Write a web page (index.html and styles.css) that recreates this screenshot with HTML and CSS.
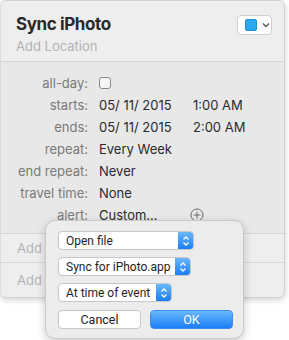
FILE: index.html
```html
<!DOCTYPE html>
<html lang="en">
<head>
  <meta charset="UTF-8">
  <title>Sync iPhoto</title>
  <link rel="stylesheet" href="styles.css">
</head>
<body>
  <div class="event-panel">
    <div class="event-header">
      <div class="title-block">
        <div class="event-title">Sync iPhoto</div>
        <div class="event-location">Add Location</div>
      </div>
      <div class="color-picker">
        <span class="color-swatch"></span>
        <svg class="chevron" width="8" height="6" viewBox="0 0 8 6"><path d="M1 1.5 L4 4.5 L7 1.5" fill="none" stroke="#555" stroke-width="1.3"/></svg>
      </div>
    </div>
    <div class="event-details">
      <div class="label">all-day:</div>
      <div class="value"><span class="checkbox"></span></div>
      <div class="label">starts:</div>
      <div class="value"><span class="date">05/ 11/ 2015</span><span class="time">1:00 AM</span></div>
      <div class="label">ends:</div>
      <div class="value"><span class="date">05/ 11/ 2015</span><span class="time">2:00 AM</span></div>
      <div class="label">repeat:</div>
      <div class="value">Every Week</div>
      <div class="label">end repeat:</div>
      <div class="value">Never</div>
      <div class="label">travel time:</div>
      <div class="value">None</div>
      <div class="label">alert:</div>
      <div class="value">Custom…
        <svg class="add-alert" width="14" height="14" viewBox="0 0 14 14"><circle cx="7" cy="7" r="6" fill="none" stroke="#6a6a6a" stroke-width="1"/><path d="M7 3.5 V10.5 M3.5 7 H10.5" stroke="#6a6a6a" stroke-width="1"/></svg>
      </div>
    </div>
    <div class="extra-row">Add Invitees</div>
    <div class="extra-row last">Add Notes, URL, or Attachments</div>
  </div>

  <div class="alert-popover">
    <div class="popup wide"><span class="popup-text">Open file</span><span class="stepper"><svg width="8" height="12" viewBox="0 0 8 12"><path d="M1.5 4.5 L4 2 L6.5 4.5 M1.5 7.5 L4 10 L6.5 7.5" fill="none" stroke="#fff" stroke-width="1.3"/></svg></span></div>
    <div class="popup mid"><span class="popup-text">Sync for iPhoto.app</span><span class="stepper"><svg width="8" height="12" viewBox="0 0 8 12"><path d="M1.5 4.5 L4 2 L6.5 4.5 M1.5 7.5 L4 10 L6.5 7.5" fill="none" stroke="#fff" stroke-width="1.3"/></svg></span></div>
    <div class="popup short"><span class="popup-text">At time of event</span><span class="stepper"><svg width="8" height="12" viewBox="0 0 8 12"><path d="M1.5 4.5 L4 2 L6.5 4.5 M1.5 7.5 L4 10 L6.5 7.5" fill="none" stroke="#fff" stroke-width="1.3"/></svg></span></div>
    <div class="button-row">
      <button class="btn">Cancel</button>
      <button class="btn primary">OK</button>
    </div>
  </div>
</body>
</html>
```
FILE: styles.css
```css
body {
  margin: 0;
  background-color: #ffffff;
  font-family: 'Inter', 'Roboto', sans-serif;
  font-size: 13px;
  color: #2b2b2b;
  width: 289px;
  height: 340px;
  overflow: hidden;
  position: relative;
}

.event-panel {
  width: 285px;
  height: 298px;
  box-sizing: border-box;
  background-color: #ececec;
  border: 1px solid #d2d2d2;
  border-left: 1px solid #dcdcdc;
  border-radius: 6px;
  box-shadow: 0 2px 6px rgba(0, 0, 0, 0.18);
  display: flex;
  flex-direction: column;
  overflow: hidden;
}

.event-header {
  height: 61px;
  box-sizing: border-box;
  padding: 13px 12px 0 15px;
  display: flex;
  justify-content: space-between;
  align-items: flex-start;
  background-color: #eeeeee;
  border-bottom: 1px solid #d4d4d4;
}

.event-title {
  font-size: 17px;
  font-weight: 700;
  color: #2a2a2a;
  letter-spacing: -0.4px;
}

.event-location {
  margin-top: 4px;
  font-size: 13px;
  color: #b3b3b3;
}

.color-picker {
  margin-top: 1px;
  width: 35px;
  height: 20px;
  box-sizing: border-box;
  background-color: #ffffff;
  border: 1px solid #cfcfcf;
  border-radius: 4px;
  display: flex;
  align-items: center;
  padding-left: 7px;
  gap: 5px;
}

.color-swatch {
  width: 10px;
  height: 10px;
  background-color: #2aa9f2;
  border: 1px solid #1c8fd6;
  border-radius: 2px;
}

.event-details {
  background-color: #e8e8e8;
  padding: 10px 0 7px 0;
  display: grid;
  grid-template-columns: 87px 1fr;
  grid-auto-rows: 22px;
  column-gap: 11px;
  align-items: center;
  border-bottom: 1px solid #d6d6d6;
}

.label {
  text-align: right;
  color: #7a7a7a;
}

.value {
  color: #2b2b2b;
  display: flex;
  align-items: center;
  white-space: nowrap;
}

.checkbox {
  width: 10px;
  height: 10px;
  border: 1px solid #8a8a8a;
  border-radius: 3px;
  background-color: #f6f6f6;
}

.date {
  width: 94px;
}

.add-alert {
  margin-left: 32px;
}

.extra-row {
  height: 29px;
  box-sizing: border-box;
  padding-left: 16px;
  display: flex;
  align-items: center;
  color: #b3b3b3;
  background-color: #eeeeee;
  border-bottom: 1px solid #d6d6d6;
  white-space: nowrap;
}

.extra-row.last {
  border-bottom: none;
  flex-grow: 1;
}

.alert-popover {
  position: absolute;
  left: 45px;
  top: 220px;
  width: 199px;
  height: 119px;
  box-sizing: border-box;
  background-color: #ececec;
  border: 1px solid #c9c9c9;
  border-radius: 10px;
  box-shadow: 0 3px 10px rgba(0, 0, 0, 0.2);
  padding: 10px 0 0 12px;
  display: flex;
  flex-direction: column;
  gap: 7px;
}

.popup {
  height: 19px;
  box-sizing: border-box;
  background-color: #ffffff;
  border: 1px solid #c6c6c6;
  border-radius: 4px;
  display: flex;
  align-items: center;
  overflow: hidden;
}

.popup.wide { width: 136px; }
.popup.mid { width: 133px; }
.popup.short { width: 114px; }

.popup-text {
  flex-grow: 1;
  padding-left: 7px;
  font-family: 'Roboto', sans-serif;
  font-size: 12px;
  color: #1e1e1e;
  white-space: nowrap;
  overflow: hidden;
}

.stepper {
  flex-shrink: 0;
  width: 15px;
  height: 100%;
  background: linear-gradient(#6ab8fb, #1a7ef5);
  display: flex;
  align-items: center;
  justify-content: center;
}

.button-row {
  margin-top: 1px;
  display: flex;
  gap: 9px;
}

.btn {
  width: 83px;
  height: 19px;
  box-sizing: border-box;
  font-family: 'Roboto', sans-serif;
  font-size: 12.5px;
  background-color: #ffffff;
  border: 1px solid #c6c6c6;
  border-radius: 4px;
  color: #222222;
  padding: 0;
}

.btn.primary {
  background: linear-gradient(#6ab8fb, #1a7ef5);
  border-color: #3b8ef0;
  color: #ffffff;
}
```
